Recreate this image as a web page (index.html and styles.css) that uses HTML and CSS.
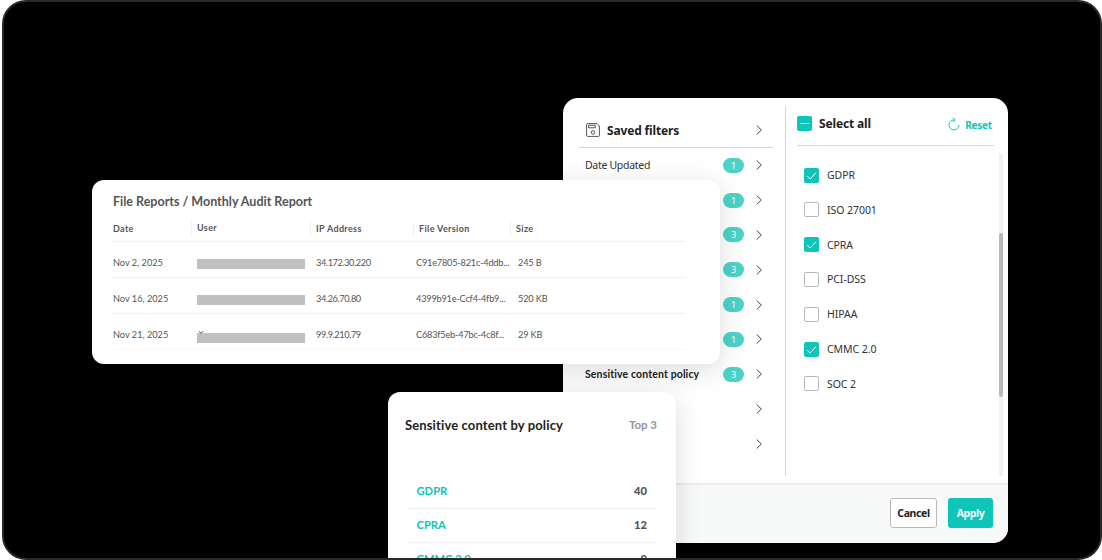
FILE: index.html
```html
<!DOCTYPE html>
<html lang="en">
<head>
    <meta charset="UTF-8">
    <meta name="viewport" content="width=device-width, initial-scale=1.0">
    <title>Audit Report</title>
    <link rel="stylesheet" href="styles.css">
</head>
<body>
    <svg width="0" height="0" class="defs">
        <symbol id="chevron" viewBox="0 0 8 12"><path d="M1.7 1.5 6.3 6 1.7 10.5"/></symbol>
        <symbol id="check" viewBox="0 0 15 15"><path d="M3.3 8.2 6.2 11 12 4.6"/></symbol>
    </svg>
    <div class="stage">
        <div class="filters">
            <div class="filters-body">
                <div class="categories">
                    <div class="saved">
                        <svg class="disk" viewBox="0 0 14 14"><path d="M.6 1.6a1 1 0 0 1 1-1h9.4l2.4 2.4v9.4a1 1 0 0 1-1 1H1.6a1 1 0 0 1-1-1zM2.6 2.2h6.6v2.6H2.6z"/><circle cx="7" cy="9.4" r="1.8"/></svg>
                        <span>Saved filters</span>
                        <svg class="chevron"><use href="#chevron"/></svg>
                    </div>
                    <div class="category"><span class="name">Date Updated</span><span class="badge">1</span><svg class="chevron"><use href="#chevron"/></svg></div>
                    <div class="category"><span class="badge">1</span><svg class="chevron"><use href="#chevron"/></svg></div>
                    <div class="category"><span class="badge">3</span><svg class="chevron"><use href="#chevron"/></svg></div>
                    <div class="category"><span class="badge">3</span><svg class="chevron"><use href="#chevron"/></svg></div>
                    <div class="category"><span class="badge">1</span><svg class="chevron"><use href="#chevron"/></svg></div>
                    <div class="category"><span class="badge">1</span><svg class="chevron"><use href="#chevron"/></svg></div>
                    <div class="category"><span class="name active">Sensitive content policy</span><span class="badge">3</span><svg class="chevron"><use href="#chevron"/></svg></div>
                    <div class="category"><svg class="chevron"><use href="#chevron"/></svg></div>
                    <div class="category"><svg class="chevron"><use href="#chevron"/></svg></div>
                </div>
                <div class="options">
                    <div class="select-all">
                        <span class="box some"></span>
                        <span class="select-label">Select all</span>
                        <svg class="reset-icon" viewBox="0 0 12 14"><path d="M7 3A5 5 0 1 0 11 8M4.8.6 7.2 3 4.8 5.4"/></svg>
                        <span class="reset">Reset</span>
                    </div>
                    <div class="option"><span class="box checked"><svg><use href="#check"/></svg></span><span>GDPR</span></div>
                    <div class="option"><span class="box"></span><span>ISO 27001</span></div>
                    <div class="option"><span class="box checked"><svg><use href="#check"/></svg></span><span>CPRA</span></div>
                    <div class="option"><span class="box"></span><span>PCI-DSS</span></div>
                    <div class="option"><span class="box"></span><span>HIPAA</span></div>
                    <div class="option"><span class="box checked"><svg><use href="#check"/></svg></span><span>CMMC 2.0</span></div>
                    <div class="option"><span class="box"></span><span>SOC 2</span></div>
                </div>
                <div class="scrollbar"><div class="thumb"></div></div>
            </div>
            <div class="filters-footer">
                <button class="cancel">Cancel</button>
                <button class="apply">Apply</button>
            </div>
        </div>

        <div class="report">
            <h2>File Reports / Monthly Audit Report</h2>
            <div class="row head">
                <span>Date</span><span class="user">User</span><span>IP Address</span><span class="version">File Version</span><span>Size</span>
            </div>
            <div class="row">
                <span>Nov 2, 2025</span><span class="masked"></span><span class="ip">34.172.30.220</span><span class="hash">C91e7805-821c-4ddb...</span><span class="size">245 B</span>
            </div>
            <div class="row">
                <span>Nov 16, 2025</span><span class="masked"></span><span class="ip">34.26.70.80</span><span class="hash">4399b91e-Ccf4-4fb9...</span><span class="size">520 KB</span>
            </div>
            <div class="row last">
                <span>Nov 21, 2025</span><span class="masked low"><svg viewBox="0 0 6 3"><path d="M.7 0 3 2.3 5.3 0"/></svg></span><span class="ip">99.9.210.79</span><span class="hash">C683f5eb-47bc-4c8f...</span><span class="size">29 KB</span>
            </div>
        </div>

        <div class="policy">
            <div class="policy-head"><h2>Sensitive content by policy</h2><span>Top 3</span></div>
            <div class="policy-row"><span>GDPR</span><b>40</b></div>
            <div class="policy-row"><span>CPRA</span><b>12</b></div>
            <div class="policy-row"><span>CMMC 2.0</span><b>9</b></div>
        </div>
    </div>
</body>
</html>
```
FILE: styles.css
```css
* {
    box-sizing: border-box;
}
body {
    margin: 0;
    background-color: white;
    font-family: Lato, "Liberation Sans", sans-serif;
    overflow: hidden;
}
h2 {
    margin: 0;
    white-space: nowrap;
}
svg {
    fill: none;
    stroke: currentColor;
    flex: none;
}
.defs {
    position: absolute;
}
.stage {
    position: relative;
    margin-left: 2px;
    width: 1100px;
    height: 560px;
    background-color: #000;
    border: 2px solid #292929;
    border-radius: 24px;
    overflow: hidden;
}

/* Filter panel */
.filters {
    position: absolute;
    left: 559px;
    top: 96px;
    width: 445px;
    height: 445px;
    border-radius: 15px;
    background-color: white;
    overflow: hidden;
    font-family: "Noto Sans", sans-serif;
    color: #333;
}
.filters-body {
    display: flex;
    height: 385px;
    padding-top: 8px;
}
.categories {
    width: 223px;
    height: 370px;
    padding: 7px 12px 0 16px;
    border-right: 1px solid #d5d5d5;
}
.saved {
    display: flex;
    align-items: center;
    height: 35px;
    padding: 0 10px 0 7px;
    border-bottom: 1px solid #d9d9d9;
    font-size: 12px;
    font-weight: 700;
    letter-spacing: -0.15px;
    color: #222;
}
.disk {
    width: 14px;
    height: 14px;
    margin-right: 7px;
    color: #555;
}
.chevron {
    width: 8px;
    height: 12px;
    margin-left: auto;
    color: #444;
}
.category {
    display: flex;
    align-items: center;
    height: 34.8px;
    padding: 0 10px 0 6px;
}
.name {
    font-size: 10.5px;
    letter-spacing: -0.3px;
    white-space: nowrap;
}
.name.active {
    font-family: Lato, sans-serif;
    font-weight: 700;
    letter-spacing: 0.13px;
    color: #222;
}
.badge {
    width: 21px;
    height: 15px;
    margin-left: auto;
    border-radius: 8px;
    background-color: #4bd3c8;
    color: white;
    font-size: 9px;
    line-height: 15px;
    text-align: center;
}
.badge + .chevron {
    margin-left: 11px;
}
.options {
    width: 208px;
}
.select-all {
    display: flex;
    align-items: center;
    height: 40px;
    margin: 0 0 11.7px 11px;
    padding-bottom: 4px;
    border-bottom: 1px solid #d9d9d9;
}
.select-label {
    margin-left: 7px;
    font-size: 12px;
    font-weight: 700;
    letter-spacing: -0.15px;
    color: #222;
}
.reset-icon {
    width: 12px;
    height: 14px;
    margin-left: auto;
    color: #0ec5b8;
}
.reset {
    margin: 2px 2px 0 5px;
    font-size: 10px;
    font-weight: 700;
    letter-spacing: -0.2px;
    color: #0ec5b8;
}
.option {
    display: flex;
    align-items: center;
    height: 34.8px;
    padding-left: 18.4px;
    font-size: 10.5px;
    letter-spacing: -0.05px;
}
.option span + span {
    margin-left: 7.6px;
}
.box {
    width: 15px;
    height: 15px;
    border: 1px solid #b9b9b9;
    border-radius: 2px;
}
.box.checked {
    border: 0;
    background-color: #0ec5b8;
    color: white;
}
.box svg {
    display: block;
    width: 15px;
    height: 15px;
}
.box.some {
    display: flex;
    align-items: center;
    justify-content: center;
    border: 0;
    background-color: #0ec5b8;
}
.box.some::before {
    content: "";
    width: 9px;
    height: 1px;
    background-color: #b9eeea;
}
.scrollbar {
    width: 4px;
    height: 322px;
    margin: 48px 0 0 5px;
    padding-top: 79px;
    background-color: #f1f1f1;
}
.thumb {
    height: 164px;
    border-radius: 2px;
    background-color: #b9b9b9;
}
.filters-footer {
    display: flex;
    justify-content: flex-end;
    gap: 11px;
    height: 60px;
    padding: 13px 15px 0 0;
    border-top: 2px solid #eceeee;
    background-color: #f8f9f9;
}
button {
    height: 30px;
    padding: 0;
    border-radius: 3px;
    font-family: "Noto Sans", sans-serif;
    font-size: 10.5px;
    font-weight: 700;
    letter-spacing: -0.4px;
}
.cancel {
    width: 47px;
    border: 1px solid #b9b9b9;
    background-color: white;
    color: #222;
}
.apply {
    width: 45px;
    border: 0;
    background-color: #0ec5b8;
    color: white;
}

/* File report card */
.report {
    position: absolute;
    left: 88px;
    top: 178px;
    width: 628px;
    height: 184px;
    padding: 13px 34px 0 21px;
    border-radius: 12px;
    background-color: white;
    box-shadow: 0 6px 28px rgba(0, 0, 0, 0.14);
    color: #555;
}
.report h2 {
    font-size: 12.5px;
    line-height: 17px;
    font-weight: 700;
}
.row {
    display: grid;
    grid-template-columns: 84px 119px 100px 101px 1fr;
    align-items: center;
    height: 36px;
    padding-top: 6px;
    border-bottom: 1px solid #f0f0f0;
    font-size: 9.2px;
    white-space: nowrap;
}
.row.head {
    height: 32px;
    font-size: 9px;
    font-weight: 700;
    letter-spacing: 0.35px;
}
.row.last {
    border-color: #f8f8f8;
}
.head span + span {
    margin-left: -6px;
    padding-left: 5px;
    border-left: 1px solid #f0f0f0;
    line-height: 14px;
}
.head .version {
    margin-left: -3px;
}
.head span:last-child {
    margin-left: -7px;
}
.head .user {
    position: relative;
    top: -1px;
}
.ip {
    letter-spacing: -0.4px;
}
.hash {
    letter-spacing: -0.2px;
}
.size {
    padding-left: 1px;
    letter-spacing: -0.15px;
}
.masked {
    width: 108px;
    height: 10px;
    margin-top: 2px;
    background-color: #bfc0c1;
}
.masked.low {
    position: relative;
    top: 2px;
}
.masked svg {
    position: absolute;
    top: -2px;
    left: 1px;
    width: 6px;
    height: 3px;
}

/* Policy card */
.policy {
    position: absolute;
    left: 384px;
    top: 390px;
    width: 288px;
    height: 190px;
    padding: 23px 20px 0;
    border-radius: 12px;
    background-color: white;
    box-shadow: 0 6px 28px rgba(0, 0, 0, 0.14);
}
.policy-head {
    display: flex;
    justify-content: space-between;
    align-items: center;
    height: 20px;
    margin: 0 -1px 40px -3px;
    padding-bottom: 1px;
    font-size: 11.5px;
    font-weight: 700;
    color: #93969b;
}
.policy-head h2 {
    font-size: 13px;
    letter-spacing: 0.13px;
    color: #222;
}
.policy-row {
    display: flex;
    justify-content: space-between;
    align-items: center;
    height: 34px;
    padding: 0 9px 2px 8.5px;
    border-bottom: 1px solid #f0f0f0;
    font-size: 11.2px;
    font-weight: 700;
    color: #0ec5b8;
}
.policy-row b {
    color: #555;
}
```
